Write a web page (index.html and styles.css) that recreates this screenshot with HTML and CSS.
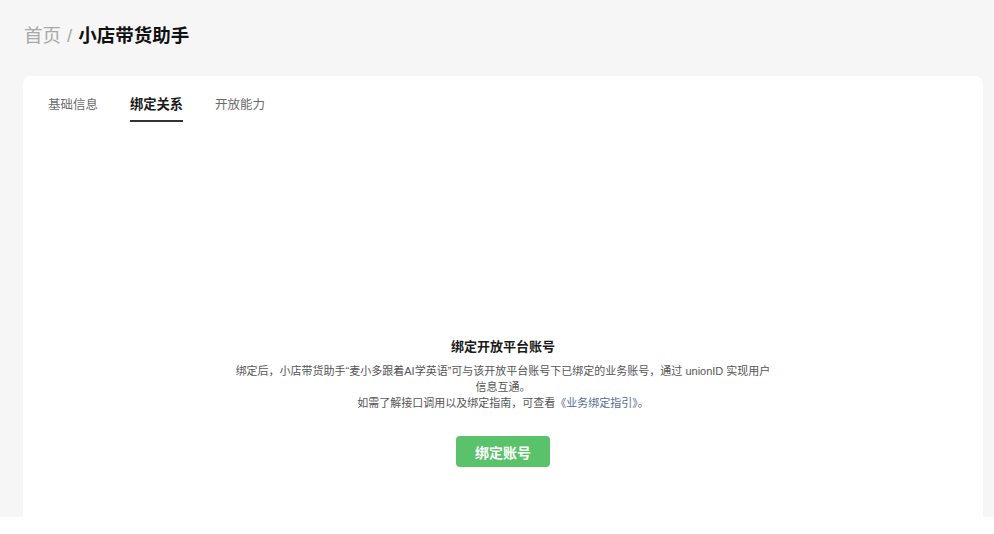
FILE: index.html
```html
<!DOCTYPE html>
<html lang="zh-CN">
<head>
  <meta charset="UTF-8">
  <meta name="viewport" content="width=device-width, initial-scale=1.0">
  <title>小店带货助手</title>
  <link rel="stylesheet" href="styles.css">
</head>
<body>

<div class="page">
  <div class="breadcrumb">
    <a href="#" class="crumb-home">首页</a>
    <span class="crumb-sep">/</span>
    <span class="crumb-current">小店带货助手</span>
  </div>

  <div class="card">
    <div class="tabs">
      <a href="#" class="tab">基础信息</a>
      <a href="#" class="tab active">绑定关系</a>
      <a href="#" class="tab">开放能力</a>
    </div>

    <div class="bind-empty">
      <h3 class="bind-title">绑定开放平台账号</h3>
      <p class="bind-desc">
        绑定后，小店带货助手“麦小多跟着AI学英语”可与该开放平台账号下已绑定的业务账号，通过 unionID 实现用户信息互通。<br>
        如需了解接口调用以及绑定指南，可查看<a href="#" class="bind-link">《业务绑定指引》</a>。
      </p>
      <button class="btn-bind">绑定账号</button>
    </div>
  </div>
</div>

</body>
</html>
```

FILE: styles.css
```css
body {
  margin: 0;
  padding: 0;
  background-color: #fff;
  font-family: "Liberation Sans", "Noto Sans CJK SC", sans-serif;
  color: #1a1a1a;
}

a {
  text-decoration: none;
}

/* grey area, cut off at the bottom like the screenshot */
.page {
  background-color: #f6f6f6;
  height: 517px;
  overflow: hidden;
  padding: 0 11px 0 23px;
}

.breadcrumb {
  height: 76px;
  display: flex;
  align-items: center;
  padding-left: 1px;
  padding-bottom: 4px;
  box-sizing: border-box;
  font-size: 18.5px;
  line-height: 26px;
}

.crumb-home {
  color: #a8a8a8;
}

.crumb-sep {
  color: #a8a8a8;
  margin: 0 6px;
}

.crumb-current {
  color: #111;
  font-weight: bold;
}

.card {
  background-color: #fff;
  border-radius: 8px;
  height: 620px;
  padding: 19px 25px 0;
}

/* Tabs */
.tabs {
  display: flex;
  gap: 32px;
}

.tab {
  display: block;
  font-size: 12.5px;
  line-height: 20px;
  color: #6b6b6b;
  padding-bottom: 5px;
  border-bottom: 2px solid transparent;
}

.tab.active {
  font-size: 13.25px;
  color: #1a1a1a;
  font-weight: bold;
  border-bottom-color: #333;
}

/* Empty bind state */
.bind-empty {
  text-align: center;
  margin-top: 215px;
}

.bind-title {
  margin: 0;
  font-size: 13px;
  line-height: 20px;
  font-weight: bold;
  color: #1a1a1a;
}

.bind-desc {
  width: 545px;
  margin: 6px auto 0;
  font-size: 11px;
  line-height: 16px;
  color: #555;
}

.bind-link {
  color: #576b95;
}

.btn-bind {
  margin-top: 25px;
  width: 94px;
  height: 31px;
  border: none;
  border-radius: 4px;
  background-color: #5ac26b;
  color: #fff;
  font-family: inherit;
  font-size: 14px;
  font-weight: bold;
  cursor: pointer;
}
```
